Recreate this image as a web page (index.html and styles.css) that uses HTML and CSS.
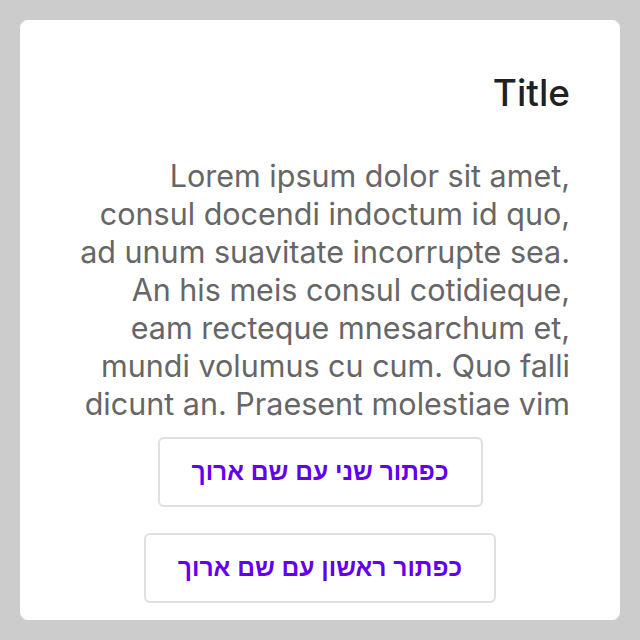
FILE: index.html
```html
<!DOCTYPE html>
<html lang="he" dir="rtl">
<head>
<meta charset="utf-8">
<link rel="stylesheet" href="styles.css">
</head>
<body>
<div class="card">
  <h1 class="title">Title</h1>
  <p class="body">Lorem ipsum dolor sit amet,<br>consul docendi indoctum id quo,<br>ad unum suavitate incorrupte sea.<br>An his meis consul cotidieque,<br>eam recteque mnesarchum et,<br>mundi volumus cu cum. Quo falli<br>dicunt an. Praesent molestiae vim</p>
  <div class="actions">
    <button class="btn">כפתור שני עם שם ארוך</button>
    <button class="btn">כפתור ראשון עם שם ארוך</button>
  </div>
</div>
</body>
</html>
```
FILE: styles.css
```css
html, body {
  margin: 0;
  padding: 0;
  background: #cccccc;
  width: 640px;
  height: 640px;
  overflow: hidden;
}
.card {
  box-sizing: border-box;
  margin: 20px;
  width: 600px;
  height: 600px;
  background: #ffffff;
  border-radius: 8px;
  padding: 51px 50px 0;
  display: flex;
  flex-direction: column;
  overflow: hidden;
}
.title {
  margin: 0;
  font-family: Inter, "Liberation Sans", sans-serif;
  font-weight: 500;
  font-size: 37px;
  line-height: 44px;
  color: #212121;
  text-align: right;
}
.body {
  margin: 42px 0 0;
  font-family: Inter, "Liberation Sans", sans-serif;
  font-size: 30.5px;
  line-height: 38px;
  color: #666666;
  direction: ltr;
  text-align: right;
  white-space: nowrap;
}
.actions {
  margin-top: 14px;
  display: flex;
  flex-direction: column;
  align-items: center;
  gap: 26px;
}
.btn {
  height: 70px;
  padding: 0 32px;
  border: 2px solid #e0e0e0;
  border-radius: 6px;
  background: #ffffff;
  color: #6200ee;
  font-family: "Liberation Sans", Arial, sans-serif;
  font-weight: bold;
  font-size: 24.6px;
}
```
